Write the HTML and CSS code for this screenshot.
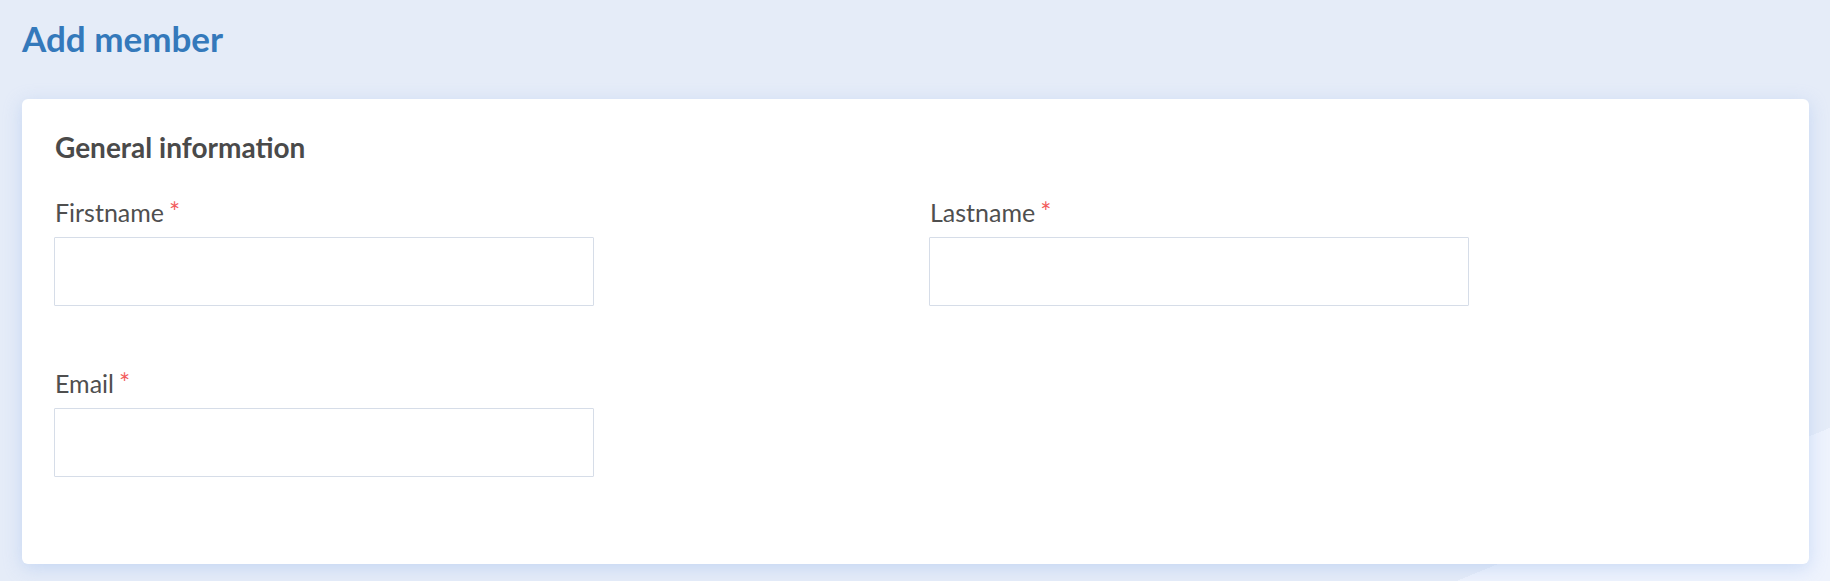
FILE: index.html
```html
<!DOCTYPE html>
<html lang="en">
<head>
<meta charset="utf-8">
<title>Add member</title>
<link rel="stylesheet" href="styles.css">
</head>
<body>
<div class="page">
  <h1 class="page-title">Add member</h1>
  <section class="card">
    <h2 class="card-title">General information</h2>
    <div class="form-grid">
      <div class="field">
        <label class="field-label" for="firstname">Firstname<span class="req">*</span></label>
        <input class="field-input" id="firstname" type="text">
      </div>
      <div class="field">
        <label class="field-label" for="lastname">Lastname<span class="req">*</span></label>
        <input class="field-input" id="lastname" type="text">
      </div>
      <div class="field">
        <label class="field-label" for="email">Email<span class="req">*</span></label>
        <input class="field-input" id="email" type="email">
      </div>
    </div>
  </section>
</div>
</body>
</html>
```

FILE: styles.css
```css
* { box-sizing: border-box; }
html, body { margin: 0; padding: 0; }
body {
  font-family: "Lato", "Open Sans", "Liberation Sans", sans-serif;
  background: #e5ecf8;
}
.page {
  min-height: 100vh;
  padding: 18px 21px 17px 22px;
  background: linear-gradient(157.7deg, #e5ecf8 88.5%, #eef3fd 88.5%);
}
.page-title {
  margin: 0 0 41px 0;
  font-size: 35px;
  line-height: 40px;
  font-weight: 700;
  color: #3479bb;
}
.card {
  background: #ffffff;
  border-radius: 6px;
  padding: 31px 32px 87px 32px;
  box-shadow: 0 4px 18px rgba(160, 188, 238, 0.45);
}
.card-title {
  margin: 0 0 34px 1px;
  font-size: 28px;
  line-height: 34px;
  font-weight: 700;
  color: #4a4a4a;
}
.form-grid {
  display: grid;
  grid-template-columns: 1fr 1fr;
  column-gap: 27px;
  row-gap: 63px;
}
.field { display: flex; flex-direction: column; align-items: flex-start; }
.field-label {
  margin: 0 0 11px 1px;
  font-size: 25px;
  line-height: 28px;
  color: #4f4f4f;
}
.req { color: #f25c5c; margin-left: 5px; font-size: 1.05em; }
.field-input {
  width: 540px;
  height: 69px;
  border: 1px solid #d6dde8;
  border-radius: 1px;
  background: #fff;
  font: inherit;
  padding: 0 12px;
  outline: none;
}
```
